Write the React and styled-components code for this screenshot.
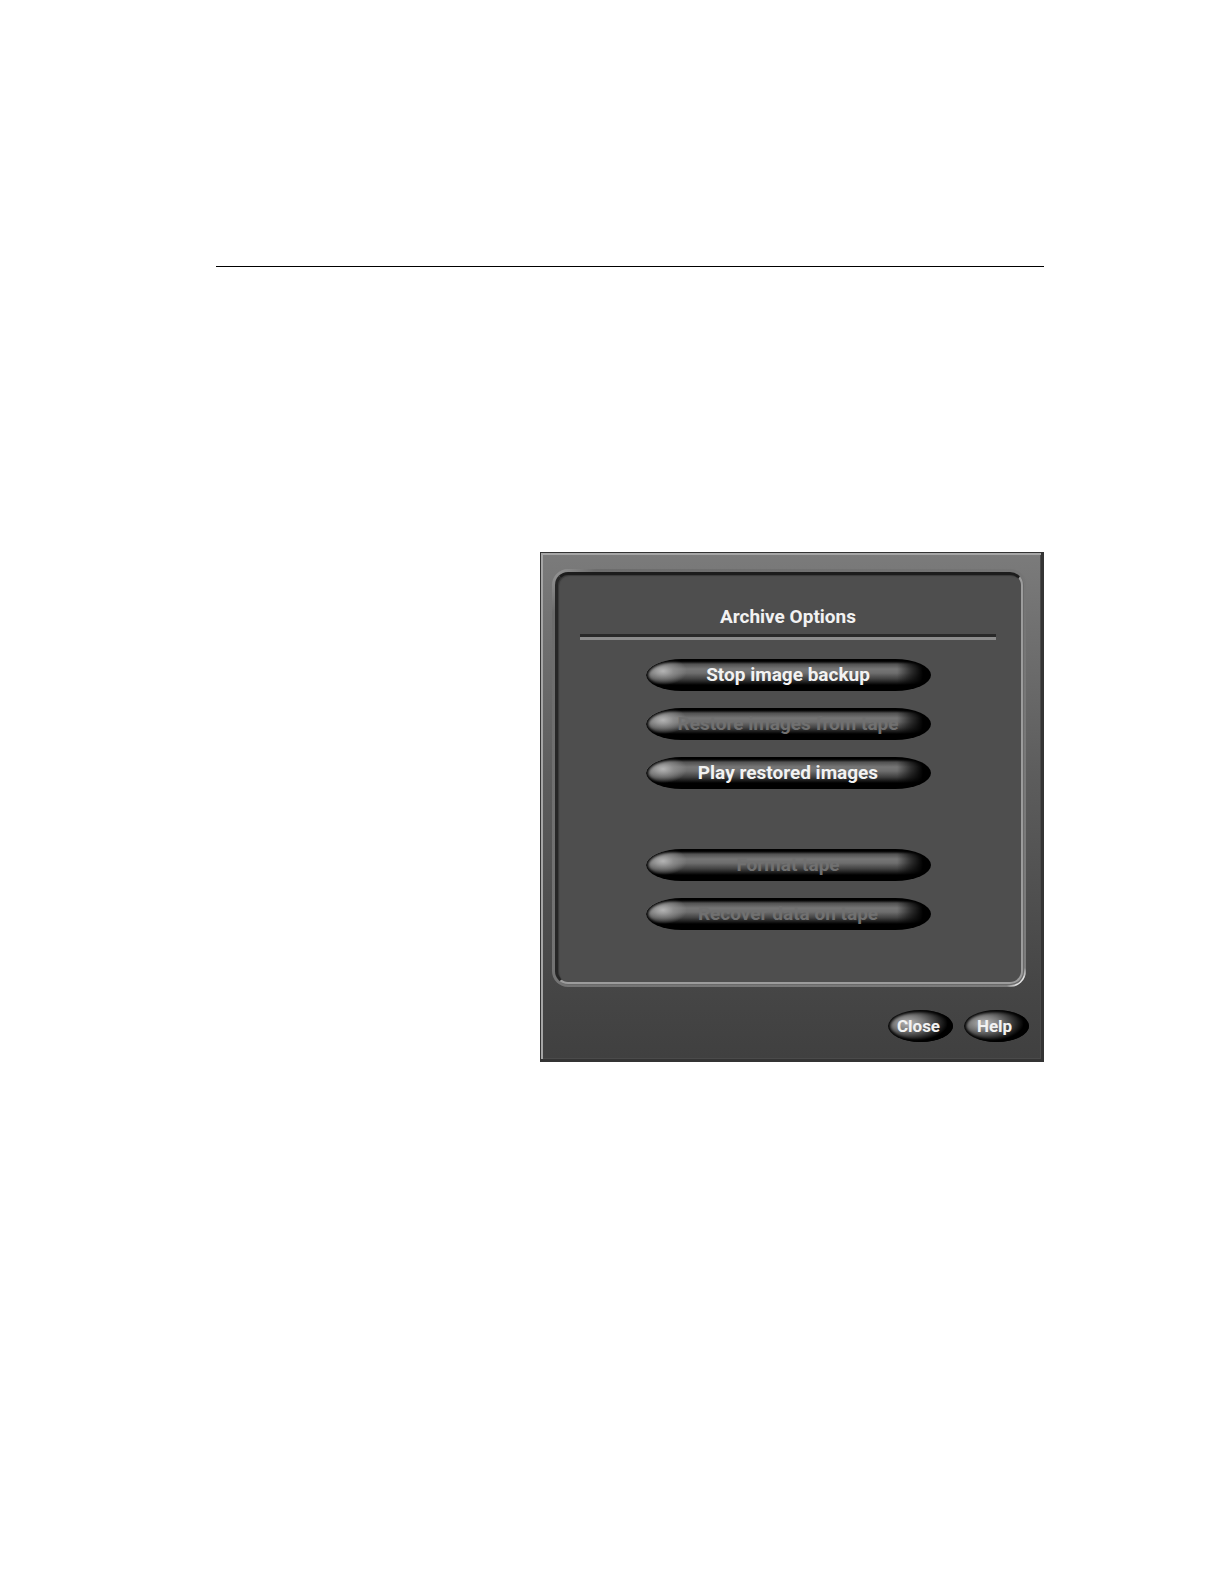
import styled, { createGlobalStyle } from "styled-components"

const GlobalStyle = createGlobalStyle`
    * {
        box-sizing: border-box;
    }

    body {
        margin: 0;
        background-color: white;
        font-family: Roboto, "Liberation Sans", sans-serif;
    }
`

const Page = styled.main`
    min-height: 100vh;
    padding: 266px 180px 180px 216px;
    display: flex;
    flex-direction: column;
    gap: 285px;
`

const Rule = styled.hr`
    width: 100%;
    margin: 0;
    border: 0;
    border-top: 1px solid black;
`

const Dialog = styled.section`
    align-self: flex-end;
    width: 504px;
    max-width: 100%;
    padding: 16px 12px 17px 9px;
    border: 1px solid #343434;
    border-right-width: 3px;
    border-bottom-width: 3px;
    background: linear-gradient(#7b7b7b, #5c5c5c 45%, #464646 85%, #404040);
    box-shadow: inset 2px 2px 0 #a6a6a6, inset -1px -1px 0 #4a4a4a;
`

const PanelFrame = styled.div`
    margin: 0 3px 0 2px;
    padding: 3px;
    border-radius: 16px;
    background: radial-gradient(
            circle at calc(100% - 6px) calc(100% - 6px),
            #e0e0e0 5px,
            transparent 14px
        ),
        linear-gradient(135deg, #9a9a9a, #6c6c6c 5%, #747474 50%, #7d7d7d);
`

const Panel = styled.div`
    padding: 29px 25px 52px 22px;
    border: 3px solid;
    border-color: #1c1c1c #9c9c9c #9c9c9c #262626;
    border-right-width: 2px;
    border-bottom-width: 2px;
    border-radius: 13px;
    background-color: #4e4e4e;
    box-shadow: inset 1px 1px 1px #3a3a3a, 1px 1px 0 #6a6a6a;
`

const Title = styled.h1`
    margin: 0;
    padding-bottom: 4px;
    border-bottom: 3px solid #292929;
    box-shadow: 0 3px 0 #8c8c8c;
    font-size: 19px;
    font-weight: 700;
    line-height: 26px;
    text-align: center;
    color: #f2f2f2;
`

const Options = styled.div`
    display: flex;
    flex-direction: column;
    align-items: center;
    gap: 17px;
    margin-top: ${({ $top }) => $top};
`

const OptionButton = styled.button`
    width: 285px;
    max-width: 100%;
    height: 32px;
    padding: 0;
    border: 0;
    border-radius: 36px / 16px;
    background: radial-gradient(
            ellipse 24px 14px at 17px 12px,
            #b4b4b4,
            rgba(150, 150, 150, 0.7) 45%,
            transparent
        ),
        linear-gradient(
            90deg,
            transparent calc(100% - 34px),
            rgba(0, 0, 0, 0.6) calc(100% - 20px),
            black calc(100% - 8px)
        ),
        linear-gradient(
            black 2px,
            #505050 5px,
            #767676 10px,
            #6e6e6e 14px,
            #404040 20px,
            black 26px
        );
    box-shadow: inset 0 0 3px 2px black;
    font-family: inherit;
    font-size: 19px;
    font-weight: 700;
    line-height: 32px;
    color: #f2f2f2;
    cursor: pointer;

    &:disabled {
        color: #707070;
        cursor: default;
    }
`

const Actions = styled.div`
    display: flex;
    justify-content: flex-end;
    gap: 11px;
    margin-top: 23px;
`

const ActionButton = styled.button`
    width: 65px;
    height: 32px;
    padding: 0 4px 0 0;
    border: 0;
    border-radius: 50%;
    background: radial-gradient(
        ellipse 40px 19px at 20px 13px,
        #b4b4b4,
        #777777 40%,
        black
    );
    box-shadow: inset 0 0 3px 2px black;
    font-family: inherit;
    font-size: 17px;
    font-weight: 700;
    line-height: 32px;
    color: #f2f2f2;
    cursor: pointer;
`

const App = () => {
    return (
        <>
            <GlobalStyle />
            <Page>
                <Rule />
                <Dialog aria-labelledby="dialog-title">
                    <PanelFrame>
                        <Panel>
                            <Title id="dialog-title">Archive Options</Title>
                            <Options $top="22px">
                                <OptionButton>Stop image backup</OptionButton>
                                <OptionButton disabled>
                                    Restore images from tape
                                </OptionButton>
                                <OptionButton>
                                    Play restored images
                                </OptionButton>
                            </Options>
                            <Options $top="60px">
                                <OptionButton disabled>
                                    Format tape
                                </OptionButton>
                                <OptionButton disabled>
                                    Recover data on tape
                                </OptionButton>
                            </Options>
                        </Panel>
                    </PanelFrame>
                    <Actions>
                        <ActionButton>Close</ActionButton>
                        <ActionButton>Help</ActionButton>
                    </Actions>
                </Dialog>
            </Page>
        </>
    )
}

export default App
